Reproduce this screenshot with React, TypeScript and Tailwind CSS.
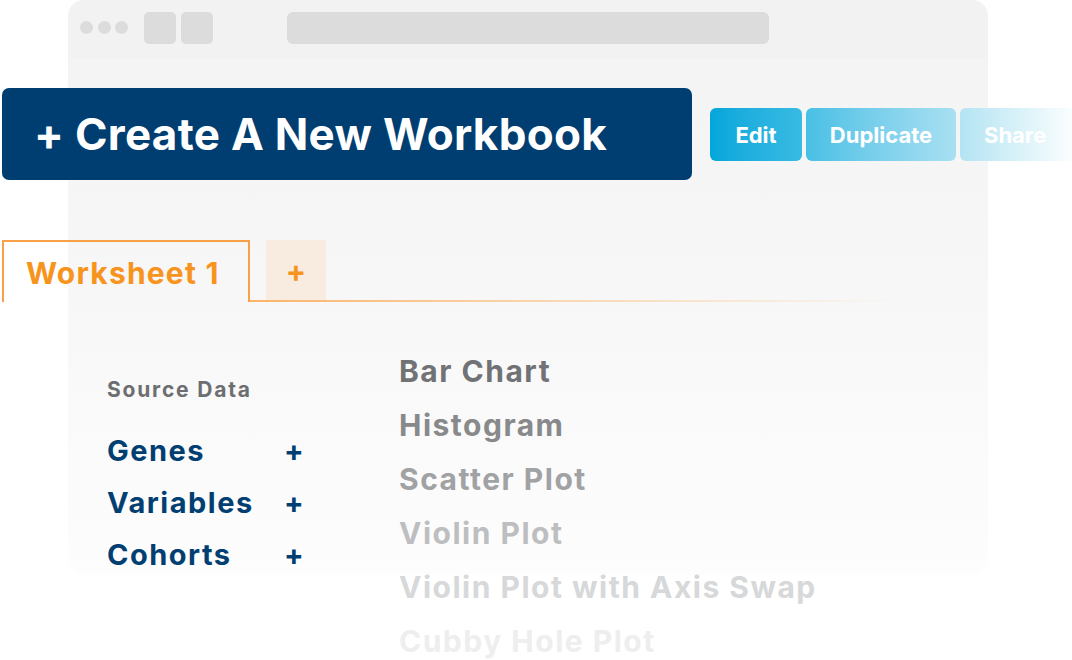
import React from "react";

const SOURCES = ["Genes", "Variables", "Cohorts"];

const CHARTS = [
  { label: "Bar Chart", color: "text-[#717275]" },
  { label: "Histogram", color: "text-[#88898b]" },
  { label: "Scatter Plot", color: "text-[#a1a2a4]" },
  { label: "Violin Plot", color: "text-[#bdbec0]" },
  { label: "Violin Plot with Axis Swap", color: "text-[#d7d8d9]" },
  { label: "Cubby Hole Plot", color: "text-[#eeeeef]" },
];

function BrowserFrame() {
  return (
    <div className="absolute left-[68px] top-0 h-[575px] w-[920px] overflow-hidden rounded-[16px] bg-gradient-to-b from-[#f3f3f3] via-[#f7f7f7] to-[#fdfdfd]">
      <div className="flex h-[58px] items-start bg-[#f2f2f2] pl-[12px] pt-[12px]">
        <div className="flex h-[31px] items-center gap-[4.5px]">
          <span className="h-[13px] w-[13px] rounded-full bg-[#dcdcdc]" />
          <span className="h-[13px] w-[13px] rounded-full bg-[#dcdcdc]" />
          <span className="h-[13px] w-[13px] rounded-full bg-[#dcdcdc]" />
        </div>
        <span className="ml-[16px] h-[32px] w-[32px] rounded-[5px] bg-[#dcdcdc]" />
        <span className="ml-[5px] h-[32px] w-[32px] rounded-[5px] bg-[#dcdcdc]" />
        <span className="ml-[74px] h-[32px] w-[482px] rounded-[6px] bg-[#dcdcdc]" />
      </div>
    </div>
  );
}

export default function App() {
  return (
    <div
      className="relative h-[660px] w-[1072px] overflow-hidden bg-white"
      style={{ fontFamily: "Inter, 'Noto Sans', sans-serif" }}
    >
      <BrowserFrame />

      <div className="relative flex flex-col pt-[88px]">
        <div className="flex items-center">
          <div className="ml-[2px] flex h-[92px] w-[690px] shrink-0 items-center rounded-[7px] bg-[#003e72] pl-[32px] text-[44px] font-bold tracking-[0.3px] text-white">
            + Create A New Workbook
          </div>
          <div className="ml-[18px] flex h-[53px] shrink-0 gap-[4px] text-[22px] font-bold text-white">
            <div className="flex w-[92px] items-center justify-center rounded-[6px] bg-gradient-to-r from-[#02a6db] to-[#36bbe3] pt-[2px]">
              Edit
            </div>
            <div className="flex w-[150px] items-center justify-center rounded-[6px] bg-gradient-to-r from-[#47c0e5] to-[#a8e0f2] pt-[2px]">
              Duplicate
            </div>
            <div className="flex w-[120px] items-center justify-start rounded-[6px] bg-gradient-to-r from-[#b3e4f3] to-white pl-[24px] pt-[2px]">
              Share
            </div>
          </div>
        </div>

        <div className="mt-[60px] flex h-[62px] items-stretch">
          <div className="ml-[2px] flex w-[248px] items-center border-x-2 border-t-2 border-[#f8a04a] pl-[22px] pt-[3px] text-[30px] font-bold tracking-[1.2px] text-[#f7941d]">
            Worksheet 1
          </div>
          <div className="flex flex-1 flex-col">
            <div className="flex flex-1 items-stretch">
              <div className="ml-[16px] flex w-[60px] items-center justify-center bg-[#f8ece1] pt-[2px] text-[30px] font-bold text-[#f7941d]">
                +
              </div>
            </div>
            <div className="h-[2px] w-[650px] bg-gradient-to-r from-[#fbb468] via-[#f9d9b5] to-transparent" />
          </div>
        </div>

        <div className="mt-[42px] flex">
          <div className="ml-[107px] w-[292px] pt-[32px]">
            <div className="text-[21px] font-bold leading-[28px] tracking-[1.8px] text-[#6d6e71]">
              Source Data
            </div>
            <div className="mt-[21px] grid grid-cols-[177px_auto]">
              {SOURCES.map((name) => (
                <React.Fragment key={name}>
                  <span className="text-[29px] font-bold leading-[52px] tracking-[1.5px] text-[#013f72]">
                    {name}
                  </span>
                  <span className="text-[29px] font-bold leading-[52px] text-[#013f72]">
                    +
                  </span>
                </React.Fragment>
              ))}
            </div>
          </div>

          <div className="flex flex-col">
            {CHARTS.map((chart) => (
              <span
                key={chart.label}
                className={`text-[30px] font-bold leading-[54px] tracking-[1.5px] ${chart.color}`}
              >
                {chart.label}
              </span>
            ))}
          </div>
        </div>
      </div>
    </div>
  );
}
